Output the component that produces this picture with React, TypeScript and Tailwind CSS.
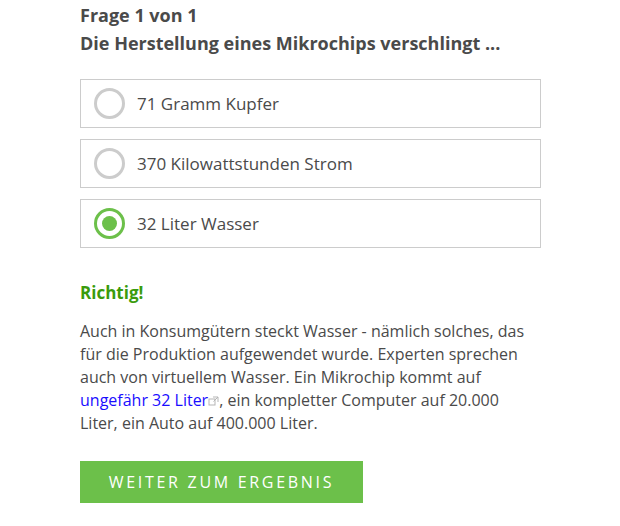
import { useState } from "react";

const options = [
  { id: 1, label: "71 Gramm Kupfer" },
  { id: 2, label: "370 Kilowattstunden Strom" },
  { id: 3, label: "32 Liter Wasser" },
];

function Radio({ checked }: { checked: boolean }) {
  return (
    <span
      className={`flex h-[31px] w-[31px] shrink-0 items-center justify-center rounded-full border-[3px] ${
        checked ? "border-[#6cc04a]" : "border-[#cccccc]"
      }`}
    >
      {checked && <span className="h-[15px] w-[15px] rounded-full bg-[#6cc04a]" />}
    </span>
  );
}

export default function App() {
  const [selected, setSelected] = useState(3);

  return (
    <div className="min-h-[526px] bg-white font-['Open_Sans',sans-serif] text-[#4a4a4a]">
      <div className="w-[461px] pl-[80px] box-content pt-[1px]">
        <h2 className="text-[18px] font-bold leading-[28px] text-[#4a4a4a]">Frage 1 von 1</h2>
        <h2 className="text-[18px] font-bold leading-[28px] text-[#4a4a4a]">
          Die Herstellung eines Mikrochips verschlingt ...
        </h2>

        <div className="mt-[22px] flex flex-col gap-[11px]">
          {options.map((o) => (
            <button
              key={o.id}
              onClick={() => setSelected(o.id)}
              className="flex h-[49px] items-center gap-[12px] border border-[#cccccc] bg-white pl-[13px] text-left"
            >
              <Radio checked={selected === o.id} />
              <span className="text-[17px] text-[#4a4a4a]">{o.label}</span>
            </button>
          ))}
        </div>

        <p className="mt-[33px] text-[17px] font-bold leading-[24px] text-[#3a9b0c]">Richtig!</p>

        <p className="mt-[15px] w-[452px] text-[16px] leading-[23px] text-[#4a4a4a]">
          Auch in Konsumgütern steckt Wasser - nämlich solches, das für die Produktion aufgewendet wurde. Experten sprechen
          auch von virtuellem Wasser. Ein Mikrochip kommt auf{" "}
          <a href="#" className="text-[#1a0dff]">
            ungefähr 32 Liter
          </a>
          <svg className="inline-block align-baseline" width="11" height="10" viewBox="0 0 11 10">
            <rect x="1" y="3" width="6" height="6" fill="none" stroke="#b5b5b5" strokeWidth="1" />
            <path d="M5 1 H10 V6 M10 1 L5.5 5.5" fill="none" stroke="#b5b5b5" strokeWidth="1" />
          </svg>
          , ein kompletter Computer auf 20.000 Liter, ein Auto auf 400.000 Liter.
        </p>

        <button className="mt-[26px] h-[42px] w-[283px] bg-[#6cc04a] text-[16px] uppercase tracking-[2.7px] text-white">
          Weiter zum Ergebnis
        </button>
      </div>
    </div>
  );
}
